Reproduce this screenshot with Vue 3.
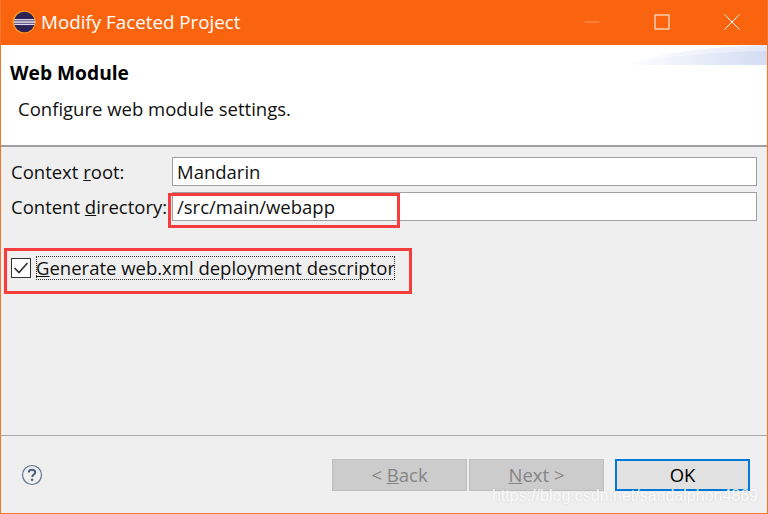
<template>
  <div class="window">
    <div class="titlebar">
      <svg class="app-icon" width="24" height="24" viewBox="0 0 26 26">
        <circle cx="13" cy="13" r="12.5" fill="#f7941e" />
        <circle cx="13.5" cy="13" r="11.2" fill="#2c2255" />
        <rect x="2.6" y="9.8" width="22" height="1.5" fill="#dcd9ec" />
        <rect x="2.2" y="12.3" width="23" height="1.5" fill="#fff" />
        <rect x="2.6" y="14.8" width="22" height="1.5" fill="#dcd9ec" />
      </svg>
      <span class="title">Modify Faceted Project</span>
      <div class="controls">
        <svg width="16" height="16" viewBox="0 0 16 16"><path d="M0.5 8H15.5" stroke="#fb9a63" fill="none" /></svg>
        <svg width="16" height="16" viewBox="0 0 16 16"><rect x="1" y="1" width="14" height="14" stroke="#fff" fill="none" /></svg>
        <svg width="16" height="16" viewBox="0 0 16 16"><path d="M0.5 0.5L15.5 15.5M15.5 0.5L0.5 15.5" stroke="#fff" fill="none" /></svg>
      </div>
    </div>

    <div class="banner">
      <svg class="swoosh" width="141" height="20" viewBox="0 0 141 20">
        <defs>
          <linearGradient id="swoosh-fill">
            <stop offset="0" stop-color="#ffffff" />
            <stop offset="1" stop-color="#d3dcf3" />
          </linearGradient>
          <linearGradient id="swoosh-top">
            <stop offset="0" stop-color="#ffffff" />
            <stop offset="1" stop-color="#e3e9f7" />
          </linearGradient>
        </defs>
        <path d="M0 20C25 9 80 2 141 0V20Z" fill="url(#swoosh-top)" />
        <path d="M0 20C30 12 85 7 141 6V20Z" fill="url(#swoosh-fill)" />
      </svg>
      <h1>Web Module</h1>
      <p>Configure web module settings.</p>
    </div>

    <div class="content">
      <div class="form-grid">
        <label>Context <u>r</u>oot:</label>
        <div class="input">Mandarin</div>
        <label>Content <u>d</u>irectory:</label>
        <div class="input">/src/main/webapp</div>
      </div>
      <div class="check-row">
        <span class="checkbox">
          <svg width="18" height="18" viewBox="0 0 18 18"><path d="M2.5 9L7 13.5L15.5 4" stroke="#333" stroke-width="1.7" fill="none" /></svg>
        </span>
        <span class="check-label"><u>G</u>enerate web.xml deployment descriptor</span>
      </div>
      <div class="mark mark-dir"></div>
      <div class="mark mark-check"></div>
    </div>

    <div class="footer">
      <svg class="help" width="22" height="22" viewBox="0 0 22 22">
        <circle cx="11" cy="11" r="9.5" fill="none" stroke="#5f7397" stroke-width="1.2" />
        <path d="M7.8 8.6C7.8 6.8 9.2 5.8 11 5.8C12.9 5.8 14.2 6.8 14.2 8.4C14.2 10.4 11.2 10.6 11.2 13" fill="none" stroke="#4a5f85" stroke-width="2" />
        <circle cx="11.1" cy="15.8" r="1.3" fill="#4a5f85" />
      </svg>
      <div class="buttons">
        <div class="btn disabled"><span>&lt; <u>B</u>ack</span></div>
        <div class="btn disabled"><span><u>N</u>ext &gt;</span></div>
        <div class="btn primary">OK</div>
      </div>
      <span class="watermark">https://blog.csdn.net/sandalphon4869</span>
    </div>
  </div>
</template>

<script setup>
</script>

<style>
html, body {
  margin: 0;
  background: #efefef;
}
</style>

<style scoped>
* {
  box-sizing: border-box;
}

.window {
  width: 768px;
  height: 514px;
  display: flex;
  flex-direction: column;
  border: 1px solid #f5772e;
  border-top: none;
  background: #efefef;
  font-family: "Open Sans", "Noto Sans", sans-serif;
  font-size: 18.5px;
  color: #111;
  overflow: hidden;
}

.titlebar {
  height: 45px;
  margin: 0 -1px;
  padding: 0 0 1px 12px;
  display: flex;
  align-items: center;
  background: #fa640e;
  color: #fff;
}

.app-icon {
  margin-right: 5px;
}

.title {
  font-size: 18.8px;
}

.controls {
  margin-left: auto;
  padding-right: 28px;
  display: flex;
  gap: 54px;
}

.banner {
  position: relative;
  height: 102px;
  padding: 15px 9px 0;
  background: #fff;
  border-bottom: 2px solid #a0a0a0;
}

.swoosh {
  position: absolute;
  top: 0;
  right: 0;
}

h1 {
  margin: 0;
  font-size: 19.2px;
  font-weight: 700;
  line-height: 25px;
  color: #000;
}

.banner p {
  margin: 11px 0 0 8px;
}

.content {
  position: relative;
  flex: 1;
  padding: 10px 10px 0;
}

.form-grid {
  display: grid;
  grid-template-columns: 161px 1fr;
  row-gap: 6px;
  align-items: center;
}

.input {
  height: 29px;
  padding: 0 4px;
  display: flex;
  align-items: center;
  background: #fff;
  border: 1px solid #a0a0a0;
}

.check-row {
  margin-top: 35px;
  display: flex;
  align-items: center;
  gap: 5px;
}

.checkbox {
  width: 20px;
  height: 20px;
  display: flex;
  align-items: center;
  justify-content: center;
  background: #fff;
  border: 1px solid #333;
}

.check-label {
  height: 24px;
  line-height: 23px;
  outline: 1px dotted #333;
  outline-offset: -1px;
}

.mark {
  position: absolute;
  border: 3px solid #f63d3d;
}

.mark-dir {
  left: 167px;
  top: 46px;
  width: 232px;
  height: 35px;
}

.mark-check {
  left: 3px;
  top: 101px;
  width: 408px;
  height: 46px;
}

.footer {
  position: relative;
  height: 78px;
  padding: 23px 17px 0 20px;
  display: flex;
  justify-content: space-between;
  border-top: 1px solid #a8a8a8;
}

.help {
  margin-top: 5px;
}

.buttons {
  display: flex;
  gap: 2px;
}

.btn {
  width: 135px;
  height: 32px;
  padding-bottom: 2px;
  display: flex;
  align-items: center;
  justify-content: center;
}

.disabled {
  background: #cccccc;
  border: 1px solid #bfbfbf;
  color: #858585;
}

.primary {
  margin-left: 9px;
  background: #e1e1e1;
  border: 2px solid #0078d7;
  color: #000;
}

.watermark {
  position: absolute;
  right: 9px;
  bottom: 8px;
  font-family: "Liberation Sans", sans-serif;
  font-size: 16px;
  color: rgba(255, 255, 255, 0.85);
  text-shadow: 0 0 2px rgba(170, 170, 170, 0.35);
}
</style>
